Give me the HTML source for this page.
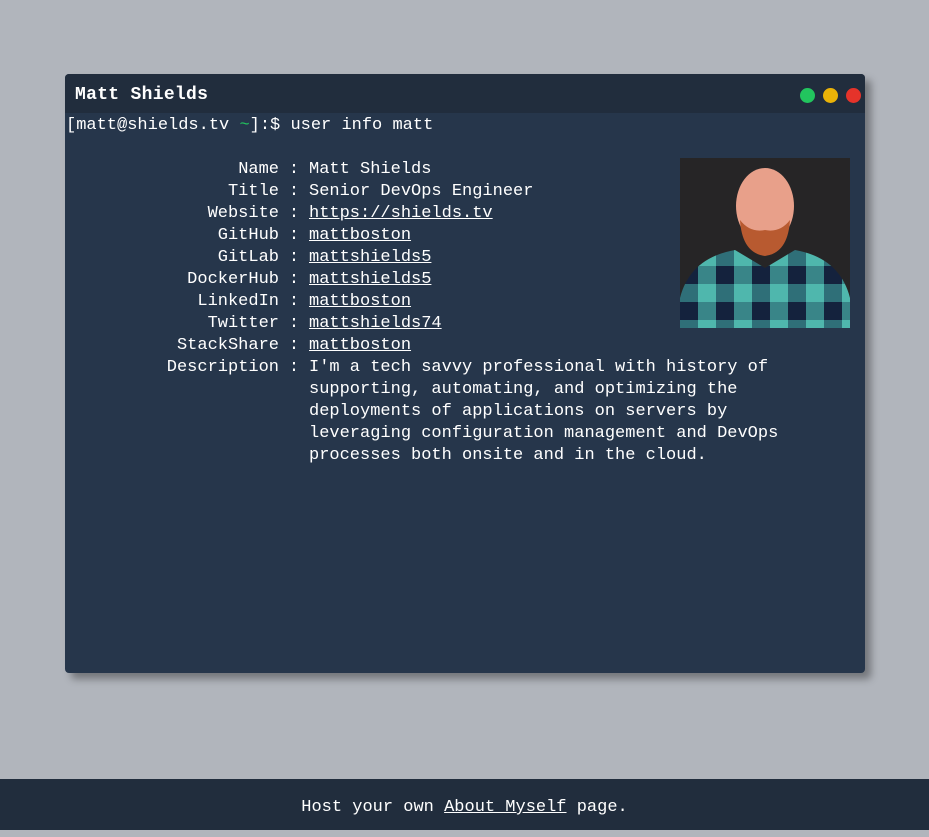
<!DOCTYPE html>
<html><head><style>
*{margin:0;padding:0;box-sizing:border-box}
body{width:929px;height:830px;background:#b1b5bc;position:relative;overflow:hidden;font-family:"Liberation Mono",monospace;color:#fff}
.win{position:absolute;left:65px;top:74px;width:800px;height:599px;background:#26364b;border-radius:4px;box-shadow:6px 6px 8px rgba(0,0,0,.35);overflow:hidden}
.tb{height:39px;background:#212d3d;position:relative}
.tb h1{position:absolute;left:10px;top:11px;font:bold 18px "Liberation Mono",monospace;letter-spacing:.3px}
.dot{position:absolute;top:14px;width:15px;height:15px;border-radius:50%}
.line{position:absolute;font-size:17px;line-height:22px;white-space:pre}
a{color:#fff;text-decoration:underline}
.lab{position:absolute;left:0;width:214px;text-align:right;font-size:17px;line-height:22px}
.val{position:absolute;left:244px;font-size:17px;line-height:22px;width:480px}
.col{position:absolute;left:214px;width:30px;text-align:center;font-size:17px;line-height:22px}
.foot{position:absolute;left:0;top:779px;width:929px;height:51px;background:#212d3d;text-align:center;font-size:17px;line-height:58px}
</style></head><body>
<div class="win">
<div class="tb"><h1>Matt Shields</h1>
<div class="dot" style="left:735px;background:#22c55e"></div>
<div class="dot" style="left:758px;background:#eab308"></div>
<div class="dot" style="left:781px;background:#e5332a"></div></div>
<div class="line" style="left:1px;top:41px">[matt@shields.tv <span style="color:#22c55e">~</span>]:$ user info matt</div>
<div style="position:absolute;left:0;top:85px;width:800px">
<div class="lab" style="top:0">Name</div><div class="col" style="top:0">:</div><div class="val" style="top:0">Matt Shields</div>
<div class="lab" style="top:22px">Title</div><div class="col" style="top:22px">:</div><div class="val" style="top:22px">Senior DevOps Engineer</div>
<div class="lab" style="top:44px">Website</div><div class="col" style="top:44px">:</div><div class="val" style="top:44px"><a>https://shields.tv</a></div>
<div class="lab" style="top:66px">GitHub</div><div class="col" style="top:66px">:</div><div class="val" style="top:66px"><a>mattboston</a></div>
<div class="lab" style="top:88px">GitLab</div><div class="col" style="top:88px">:</div><div class="val" style="top:88px"><a>mattshields5</a></div>
<div class="lab" style="top:110px">DockerHub</div><div class="col" style="top:110px">:</div><div class="val" style="top:110px"><a>mattshields5</a></div>
<div class="lab" style="top:132px">LinkedIn</div><div class="col" style="top:132px">:</div><div class="val" style="top:132px"><a>mattboston</a></div>
<div class="lab" style="top:154px">Twitter</div><div class="col" style="top:154px">:</div><div class="val" style="top:154px"><a>mattshields74</a></div>
<div class="lab" style="top:176px">StackShare</div><div class="col" style="top:176px">:</div><div class="val" style="top:176px"><a>mattboston</a></div>
<div class="lab" style="top:198px">Description</div><div class="col" style="top:198px">:</div><div class="val" style="top:198px">I'm a tech savvy professional with history of supporting, automating, and optimizing the deployments of applications on servers by leveraging configuration management and DevOps processes both onsite and in the cloud.</div>
</div>
<svg style="position:absolute;left:615px;top:84px" width="170" height="170" viewBox="0 0 170 170">
<defs><pattern id="p" width="36" height="36" patternUnits="userSpaceOnUse"><rect width="36" height="36" fill="#4fb7ad"/><rect width="18" height="36" fill="#2f6f78"/><rect width="36" height="18" fill="#2f6f78" opacity=".7"/><rect width="18" height="18" fill="#14223d"/></pattern></defs>
<rect width="170" height="170" fill="#262526"/>
<path d="M0 140 Q10 100 55 92 L85 110 L115 92 Q160 100 170 140 L170 170 L0 170Z" fill="url(#p)"/>
<ellipse cx="85" cy="48" rx="29" ry="38" fill="#e8a08a"/>
<path d="M60 62 Q62 95 85 98 Q108 95 110 62 Q100 75 85 72 Q70 75 60 62Z" fill="#b85a30"/>
</svg>
</div>
<div class="foot">Host your own <a>About Myself</a> page.</div>
</body></html>
